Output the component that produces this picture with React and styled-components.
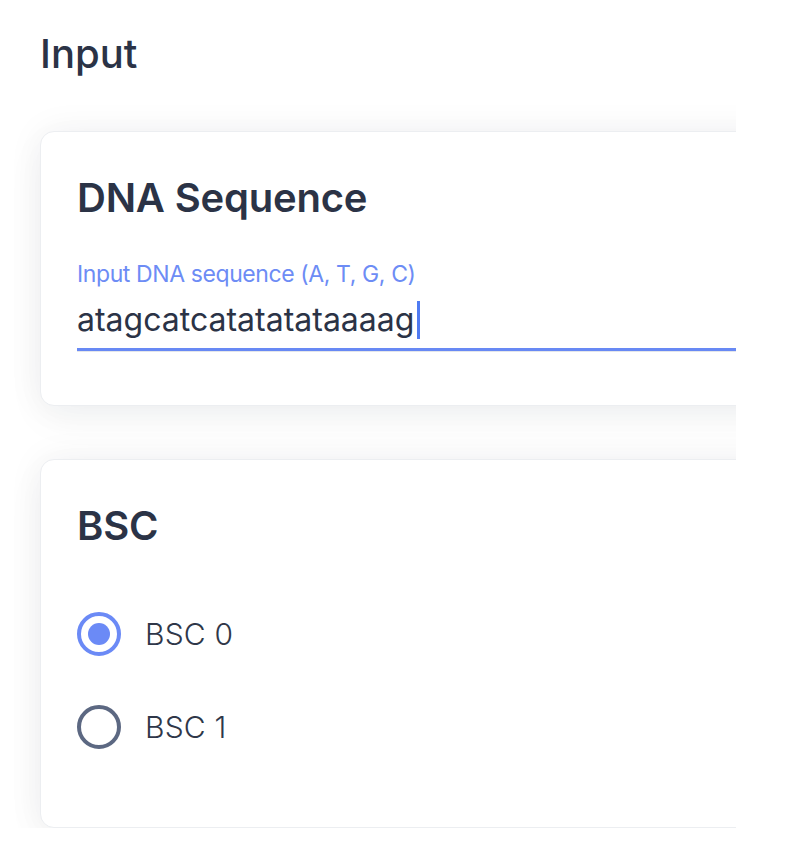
import React, { useState } from 'react'
import styled, { createGlobalStyle } from 'styled-components'

const GlobalStyle = createGlobalStyle`
  body {
    margin: 0;
    background: #ffffff;
    font-family: Inter, "Noto Sans", sans-serif;
    color: #2b3346;
  }
`

const Page = styled.div`
  width: 736px;
  height: 828px;
  overflow: hidden;
  padding: 30px 0 0 40px;
  box-sizing: border-box;
`

const PageTitle = styled.h1`
  margin: 0 0 53px;
  font-size: 40px;
  line-height: 48px;
  font-weight: 500;
  color: #2b3346;
`

const Stack = styled.div`
  display: flex;
  flex-direction: column;
  gap: 53px;
`

const Card = styled.section`
  width: 760px;
  box-sizing: border-box;
  background: #ffffff;
  border: 1px solid #eceef1;
  border-radius: 14px;
  box-shadow: 0 0 36px rgba(30, 41, 59, 0.06), 0 14px 40px rgba(30, 41, 59, 0.04);
  padding: 42px 36px ${p => p.$bottom}px;
`

const CardTitle = styled.h2`
  margin: 0;
  font-size: 40px;
  line-height: 48px;
  font-weight: 600;
  letter-spacing: -0.2px;
  color: #2b3346;
`

const Field = styled.div`
  margin-top: 38px;
  display: flex;
  flex-direction: column;
`

const FieldLabel = styled.label`
  font-size: 23px;
  line-height: 28px;
  color: #6d8cf5;
  letter-spacing: -0.4px;
`

const InputLine = styled.div`
  margin-top: 12px;
  padding-bottom: 8px;
  display: flex;
  align-items: center;
  font-size: 32px;
  line-height: 40px;
  color: #2b3346;
  border-bottom: 3px solid #6889f4;
  box-shadow: 0 1px 0 #e4e6ea;
`

const Caret = styled.span`
  display: inline-block;
  width: 3px;
  height: 38px;
  margin-left: 3px;
  background: #4f7bf2;
`

const RadioGroup = styled.div`
  margin-top: 54px;
  display: flex;
  flex-direction: column;
  gap: 33px;
`

const RadioRow = styled.label`
  display: flex;
  align-items: center;
  gap: 24px;
  height: 60px;
  cursor: pointer;
`

const RadioDot = styled.span`
  width: 44px;
  height: 44px;
  box-sizing: border-box;
  border-radius: 50%;
  border: 4px solid ${p => (p.$checked ? '#6b8af6' : '#5c6882')};
  display: flex;
  align-items: center;
  justify-content: center;

  &::after {
    content: '';
    width: 22px;
    height: 22px;
    border-radius: 50%;
    background: ${p => (p.$checked ? '#6b8af6' : 'transparent')};
  }
`

const RadioText = styled.span`
  font-size: 30px;
  font-weight: 300;
  letter-spacing: 0.2px;
  color: #2f3749;
`

const options = ['BSC 0', 'BSC 1']

export default function App() {
  const [bsc, setBsc] = useState(0)

  return (
    <>
      <GlobalStyle />
      <Page>
        <PageTitle>Input</PageTitle>
        <Stack>
          <Card $bottom={54}>
            <CardTitle>DNA Sequence</CardTitle>
            <Field>
              <FieldLabel>Input DNA sequence (A, T, G, C)</FieldLabel>
              <InputLine>
                atagcatcatatatataaaag
                <Caret />
              </InputLine>
            </Field>
          </Card>
          <Card $bottom={70}>
            <CardTitle>BSC</CardTitle>
            <RadioGroup>
              {options.map((opt, i) => (
                <RadioRow key={opt} onClick={() => setBsc(i)}>
                  <RadioDot $checked={bsc === i} />
                  <RadioText>{opt}</RadioText>
                </RadioRow>
              ))}
            </RadioGroup>
          </Card>
        </Stack>
      </Page>
    </>
  )
}
